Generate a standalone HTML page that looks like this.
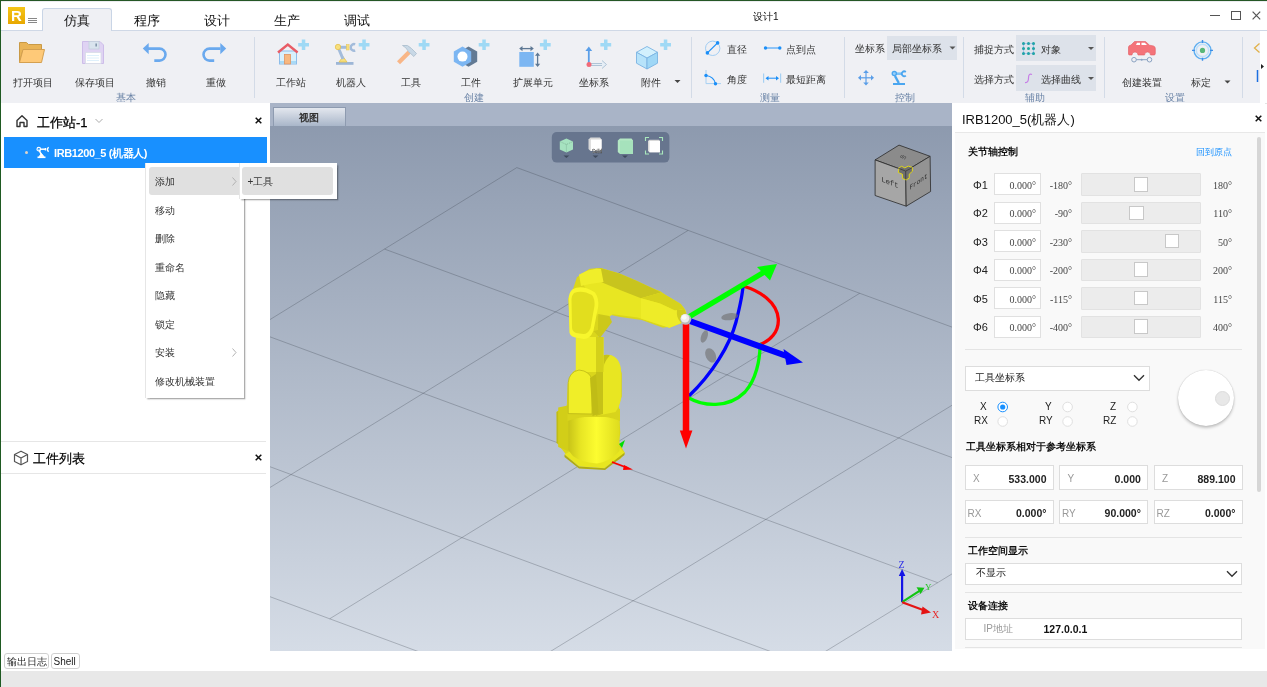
<!DOCTYPE html>
<html><head><meta charset="utf-8">
<style>
*{box-sizing:border-box;margin:0;padding:0}
html,body{width:1267px;height:687px;overflow:hidden;background:#fff;font-family:"Liberation Sans",sans-serif;color:#222}
.a{position:absolute}
.t{position:absolute;white-space:nowrap;line-height:1}
#top{left:0;top:0;width:1267px;height:1px;background:#255725}
#lft{left:0;top:0;width:1px;height:687px;background:#1f5a22}
#ribbon{left:1px;top:30px;width:1266px;height:73px;background:#eff0f4;border-top:1px solid #cfd8e6}
.sep{position:absolute;width:1px;background:#d3dbe7}
.lbl{position:absolute;margin:1px 0 0 1px;font-size:10px;color:#333;white-space:nowrap;line-height:1;text-align:center}
.grp{position:absolute;margin:1px 0 0 1px;font-size:10px;color:#6a83a6;white-space:nowrap;line-height:1}
#left{left:1px;top:103px;width:265px;height:548px;background:#fff}
#gapL{left:265px;top:103px;width:5px;height:548px;background:#fff}
#vp{left:270px;top:103px;width:682px;height:548px;background:linear-gradient(#8a97ac,#d5dce6)}
#vptabs{left:270px;top:103px;width:682px;height:23px;background:#a9b4c7}
#gapR{left:952px;top:103px;width:3px;height:548px;background:#fff}
#right{left:955px;top:103px;width:310px;height:546px;background:#f9f9f9}
#bottom{left:1px;top:671px;width:1266px;height:16px;background:#e8e8e8}
</style></head><body>
<div id="root" style="position:absolute;left:0;top:0;width:1267px;height:687px;will-change:transform">
<div id="top" class="a"></div><div class="a" style="left:0;top:1px;width:1267px;height:1px;background:#ececf0"></div>
<div id="ribbon" class="a"></div>
<!-- TITLE BAR -->
<div class="a" style="left:8px;top:7px;width:17px;height:17px;background:linear-gradient(#f5c518,#e8a800)"></div>
<div class="t" style="left:11px;top:8px;font-size:15px;font-weight:bold;color:#fff">R</div>
<div class="a" style="left:28px;top:18px;width:9px;height:1px;background:#888"></div>
<div class="a" style="left:28px;top:20px;width:9px;height:1px;background:#888"></div>
<div class="a" style="left:28px;top:22px;width:9px;height:1px;background:#888"></div>
<div class="a" style="left:42px;top:8px;width:70px;height:23px;background:#eff0f4;border:1px solid #c9d5e6;border-bottom:none;border-radius:3px 3px 0 0"></div>
<div class="t" style="left:64px;top:14px;font-size:13px;color:#111">仿真</div>
<div class="t" style="left:134px;top:14px;font-size:13px;color:#111">程序</div>
<div class="t" style="left:204px;top:14px;font-size:13px;color:#111">设计</div>
<div class="t" style="left:274px;top:14px;font-size:13px;color:#111">生产</div>
<div class="t" style="left:344px;top:14px;font-size:13px;color:#111">调试</div>
<div class="t" style="left:753px;top:12px;font-size:10px;color:#111">设计1</div>
<div class="a" style="left:1210px;top:15px;width:10px;height:1.2px;background:#555"></div>
<div class="a" style="left:1231px;top:11px;width:10.2px;height:9px;border:1.2px solid #555"></div>
<svg class="a" style="left:1252px;top:11px" width="9" height="9"><path d="M0.6 0.6L8.2 8.4M8.2 0.6L0.6 8.4" stroke="#555" stroke-width="1.2"/></svg>


<!-- RIBBON CONTENT -->
<div class="a" style="left:1px;top:103px;width:1266px;height:1px;background:#e4e4e4"></div>
<div class="sep" style="left:254px;top:37px;height:61px"></div>
<div class="sep" style="left:691px;top:37px;height:61px"></div>
<div class="sep" style="left:844px;top:37px;height:61px"></div>
<div class="sep" style="left:963px;top:37px;height:61px"></div>
<div class="sep" style="left:1104px;top:37px;height:61px"></div>
<div class="sep" style="left:1242px;top:37px;height:61px"></div>
<div class="a" style="left:1260px;top:31px;width:7px;height:72px;background:#fff"></div>
<div class="lbl" style="left:12px;top:77px">打开项目</div>
<div class="lbl" style="left:74px;top:77px">保存项目</div>
<div class="lbl" style="left:145px;top:77px">撤销</div>
<div class="lbl" style="left:205px;top:77px">重做</div>
<div class="grp" style="left:115px;top:92px">基本</div>
<div class="lbl" style="left:275px;top:77px">工作站</div>
<div class="lbl" style="left:335px;top:77px">机器人</div>
<div class="lbl" style="left:400px;top:77px">工具</div>
<div class="lbl" style="left:460px;top:77px">工件</div>
<div class="lbl" style="left:512px;top:77px">扩展单元</div>
<div class="lbl" style="left:578px;top:77px">坐标系</div>
<div class="lbl" style="left:640px;top:77px">附件</div>
<div class="grp" style="left:463px;top:92px">创建</div>
<div class="lbl" style="left:726px;top:44px">直径</div>
<div class="lbl" style="left:785px;top:44px">点到点</div>
<div class="lbl" style="left:726px;top:74px">角度</div>
<div class="lbl" style="left:785px;top:74px">最短距离</div>
<div class="grp" style="left:759px;top:92px">测量</div>
<div class="lbl" style="left:854px;top:43px">坐标系</div>
<div class="a" style="left:887px;top:36px;width:70px;height:24px;background:#dde2ea"></div>
<div class="lbl" style="left:891px;top:43px">局部坐标系</div>
<div class="grp" style="left:894px;top:92px">控制</div>
<div class="lbl" style="left:973px;top:44px">捕捉方式</div>
<div class="a" style="left:1016px;top:35px;width:80px;height:26px;background:#dde2ea"></div>
<div class="lbl" style="left:1040px;top:44px">对象</div>
<div class="lbl" style="left:973px;top:74px">选择方式</div>
<div class="a" style="left:1016px;top:65px;width:80px;height:26px;background:#dde2ea"></div>
<div class="lbl" style="left:1040px;top:74px">选择曲线</div>
<div class="grp" style="left:1024px;top:92px">辅助</div>
<div class="lbl" style="left:1121px;top:77px">创建装置</div>
<div class="lbl" style="left:1190px;top:77px">标定</div>
<div class="grp" style="left:1164px;top:92px">设置</div>
<svg class="a" style="left:0;top:0" width="1267" height="103">
 <!-- folder -->
 <path d="M19.5 62.5V42.5H26.5L28.5 44.5H41.5V50H23Z" fill="#e9b457" stroke="#c99a46" stroke-width="1"/>
 <path d="M19.5 62.5L23 49.5H44.5L41.5 62.5Z" fill="#fec978" stroke="#d4a050" stroke-width="1"/>
 <!-- save -->
 <path d="M82.5 41.5H100L103.5 45V63.5H82.5Z" fill="#dfd3f3" stroke="#cdbde9" stroke-width="1"/>
 <rect x="89" y="41.5" width="10" height="7.5" fill="#d9e4ee" stroke="#c3d0dc" stroke-width="0.8"/>
 <rect x="95.5" y="43.5" width="1.3" height="3" fill="#6e849c"/>
 <rect x="85.5" y="52.5" width="15.5" height="11" fill="#fff" stroke="#d8dde6" stroke-width="0.8"/>
 <path d="M87 55.5H99M87 58H99M87 60.5H99" stroke="#d6ecfa" stroke-width="0.8"/>
 <!-- undo / redo -->
 <path d="M148 48.6H159.5A6 6 0 0 1 159.5 60.6H154.3" fill="none" stroke="#6aa9ee" stroke-width="2.6"/>
 <path d="M142.8 48.6L148.7 43V54.2Z" fill="#6aa9ee"/>
 <path d="M220.5 48.6H209.5A6 6 0 0 0 209.5 60.6H214.2" fill="none" stroke="#6aa9ee" stroke-width="2.6"/>
 <path d="M226.2 48.6L220.3 43V54.2Z" fill="#6aa9ee"/>
 <!-- plus signs -->
 <g fill="#9fd9f5">
  <path d="M301.8 39.5h3.5v3.6h3.7v3.5h-3.7v3.5h-3.5v-3.5h-3.6v-3.5h3.6z"/>
  <path d="M362.3 39.5h3.5v3.6h3.7v3.5h-3.7v3.5h-3.5v-3.5h-3.6v-3.5h3.6z"/>
  <path d="M422.3 39.5h3.5v3.6h3.7v3.5h-3.7v3.5h-3.5v-3.5h-3.6v-3.5h3.6z"/>
  <path d="M482.3 39.5h3.5v3.6h3.7v3.5h-3.7v3.5h-3.5v-3.5h-3.6v-3.5h3.6z"/>
  <path d="M543.5 39.5h3.5v3.6h3.7v3.5h-3.7v3.5h-3.5v-3.5h-3.6v-3.5h3.6z"/>
  <path d="M604 39.5h3.5v3.6h3.7v3.5h-3.7v3.5h-3.5v-3.5h-3.6v-3.5h3.6z"/>
  <path d="M663.8 39.5h3.5v3.6h3.7v3.5h-3.7v3.5h-3.5v-3.5h-3.6v-3.5h3.6z"/>
 </g>
 <!-- house -->
 <rect x="279.5" y="51" width="17" height="13" fill="#d8f0fc" stroke="#8dbde9" stroke-width="1"/>
 <rect x="280" y="61" width="16" height="2.5" fill="#a8daf6"/>
 <rect x="284.5" y="54.5" width="6" height="9.5" fill="#f8b880" stroke="#e09462" stroke-width="0.8"/>
 <path d="M278 52.5L287.8 44.6L297.6 52.5" fill="none" stroke="#e85c66" stroke-width="2.4"/>
 <!-- robot icon -->
 <rect x="336" y="62" width="17.5" height="2.8" fill="#9db6d6"/>
 <path d="M339 62L343 56.5L347 62Z" fill="#f7df7d" stroke="#e6c24e" stroke-width="0.8"/>
 <path d="M343 59L338 47" stroke="#a3bcdb" stroke-width="3"/>
 <path d="M339 47.3H348" stroke="#a3bcdb" stroke-width="3"/>
 <circle cx="338" cy="47" r="2.7" fill="#f7df7d" stroke="#e6c24e" stroke-width="0.8"/>
 <rect x="346.5" y="44.6" width="2.6" height="5.4" fill="#f7df7d" stroke="#e6c24e" stroke-width="0.5"/>
 <path d="M355.2 44.3A3.3 3.3 0 1 0 355.2 50.5" fill="none" stroke="#a3bcdb" stroke-width="2.4"/>
 <!-- hammer -->
 <path d="M398.5 62.8L409 52.3" stroke="#f8b687" stroke-width="4.2"/>
 <path d="M402.5 45.5Q408 44 411.5 48.5L416.5 53.5L413.8 56.5L408.5 51.5Q406 47 402.5 45.5Z" fill="#c8d8e6" stroke="#a9bccc" stroke-width="0.8"/>
 <!-- nut -->
 <path d="M468.5 46.4L477.2 51.5V61.7L468.5 66.8L459.8 61.7V51.5Z" fill="#627a94"/>
 <path d="M462.5 46.4L471.2 51.5V61.7L462.5 66.8L453.8 61.7V51.5Z" fill="#7cb6f2"/>
 <circle cx="462.5" cy="56.6" r="5" fill="#fff"/>
 <!-- ext unit -->
 <rect x="519.3" y="52" width="14.5" height="14.8" fill="#7cb6f2"/>
 <path d="M521 48.6H532" stroke="#5e7894" stroke-width="1.3"/>
 <path d="M519.2 48.6L522.5 46V51.2ZM533.8 48.6L530.5 46V51.2Z" fill="#5e7894"/>
 <path d="M537.6 54.5V65" stroke="#5e7894" stroke-width="1.3"/>
 <path d="M537.6 52.5L535 55.8H540.2ZM537.6 67L535 63.7H540.2Z" fill="#5e7894"/>
 <!-- coord -->
 <path d="M589 64.5H603" stroke="#a9bfd3" stroke-width="3"/>
 <path d="M589 64.5H603" stroke="#e6eef6" stroke-width="1.2"/>
 <path d="M602 60.5L606.5 64.5L602 68.5" fill="#e6eef6" stroke="#a9bfd3" stroke-width="0.9"/>
 <path d="M588.8 64V50" stroke="#5a9ee8" stroke-width="1.8"/>
 <path d="M588.8 46.5L585.4 51H592.2Z" fill="#5a9ee8"/>
 <circle cx="589" cy="64.5" r="2.5" fill="#f26a78"/>
 <!-- cube -->
 <path d="M647 46.5L657.5 52.3L647 58.1L636.5 52.3Z" fill="#d2f0fd" stroke="#7ab3e2" stroke-width="0.9"/>
 <path d="M636.5 52.3L647 58.1V69L636.5 63.2Z" fill="#b7e3fa" stroke="#7ab3e2" stroke-width="0.9"/>
 <path d="M657.5 52.3L647 58.1V69L657.5 63.2Z" fill="#9fd7f6" stroke="#7ab3e2" stroke-width="0.9"/>
 <path d="M674.5 80L680.5 80L677.5 83Z" fill="#444"/>
 <!-- measure -->
 <circle cx="712.7" cy="48.3" r="7.2" fill="none" stroke="#98c8f2" stroke-width="0.9"/>
 <path d="M707.4 52.9L717.6 42.9" stroke="#1b8ff8" stroke-width="1.3"/>
 <circle cx="707.4" cy="52.9" r="1.8" fill="#1b8ff8"/><circle cx="717.6" cy="42.9" r="1.8" fill="#1b8ff8"/>
 <path d="M765.5 48H779.8" stroke="#3d9ff8" stroke-width="1.1"/>
 <circle cx="765.5" cy="48" r="1.7" fill="#1b8ff8"/><circle cx="779.8" cy="48" r="1.7" fill="#1b8ff8"/>
 <path d="M706 70V83.6H721" fill="none" stroke="#a6d0f2" stroke-width="1"/>
 <path d="M706 75.5Q714 76.5 715.5 83.8" fill="none" stroke="#1b8ff8" stroke-width="1.2"/>
 <circle cx="706" cy="75.5" r="1.7" fill="#1b8ff8"/><circle cx="715.5" cy="83.8" r="1.7" fill="#1b8ff8"/>
 <path d="M763.6 73.5V82.8M780.6 73.5V82.8" stroke="#a6d0f2" stroke-width="1.2"/>
 <path d="M767 78.2H777" stroke="#1b8ff8" stroke-width="1"/>
 <path d="M765.5 78.2L768.5 76V80.4ZM779 78.2L776 76V80.4Z" fill="#1b8ff8"/>
 <!-- control -->
 <path d="M949.5 46.5H955.5L952.5 49.5Z" fill="#555"/>
 <g fill="#5a9ee8">
  <path d="M859.5 77.2H872.5V78.4H859.5Z"/><path d="M865.4 71.3H866.6V84.3H865.4Z"/>
  <path d="M858 77.8L861 75V80.6Z"/><path d="M874 77.8L871 75V80.6Z"/>
  <path d="M866 70L863.2 73H868.8Z"/><path d="M866 85.6L863.2 82.6H868.8Z"/>
 </g>
 <g fill="none" stroke="#4aa6f0">
  <path d="M893 84H905" stroke-width="2"/>
  <path d="M895 76L898.8 83" stroke-width="2.4"/>
  <path d="M896 73.7H902" stroke-width="2.6" stroke="#7cc2f6"/>
  <circle cx="894.3" cy="73.6" r="2.1" stroke-width="1.3" fill="#9ad0f8"/>
  <path d="M905.8 72A2.4 2.4 0 1 0 905.8 75.6" stroke-width="1.8"/>
 </g>
 <!-- assist -->
 <g fill="#1aa79c">
  <circle cx="1023.5" cy="43.5" r="1.5"/><circle cx="1028.5" cy="43.5" r="1.5"/><circle cx="1033.5" cy="43.5" r="1.5"/>
  <circle cx="1023.5" cy="48.5" r="1.5"/><circle cx="1028.5" cy="48.5" r="1.5"/><circle cx="1033.5" cy="48.5" r="1.5"/>
  <circle cx="1023.5" cy="53.5" r="1.5"/><circle cx="1028.5" cy="53.5" r="1.5"/><circle cx="1033.5" cy="53.5" r="1.5"/>
 </g>
 <path d="M1023.5 43.5H1033.5V53.5H1023.5Z" fill="none" stroke="#3a8ee0" stroke-width="0.7" stroke-dasharray="1 1"/>
 <path d="M1088 47H1094L1091 50Z" fill="#555"/>
 <path d="M1032 74.5Q1028.5 73 1028.5 78Q1028.5 83 1025 82.5" fill="none" stroke="#c77ee6" stroke-width="1.2"/>
 <path d="M1088 77H1094L1091 80Z" fill="#555"/>
 <!-- settings -->
 <path d="M1128.5 47Q1128.5 45.5 1131 45L1134.5 41.5H1145.5L1149.5 45.2L1153.5 46Q1155.3 46.5 1155.3 48.5V53.5Q1155.3 55 1154 55H1150.5A3 3 0 0 0 1144.5 55H1138A3 3 0 0 0 1132 55H1129.5Q1128.5 55 1128.5 54Z" fill="#f47379" stroke="#e25a62" stroke-width="0.6"/>
 <path d="M1136 45L1137 42.8H1140V45ZM1141.5 45V42.8H1144.8L1147 45Z" fill="#fff"/>
 <path d="M1134 59.7H1149" stroke="#8ba3c2" stroke-width="1"/>
 <circle cx="1134" cy="59.7" r="2.3" fill="#eff0f4" stroke="#8ba3c2" stroke-width="1"/>
 <circle cx="1149.5" cy="59.7" r="2.3" fill="#eff0f4" stroke="#8ba3c2" stroke-width="1"/>
 <circle cx="1141.7" cy="59.7" r="1" fill="#8ba3c2"/>
 <circle cx="1202.5" cy="50.4" r="8.5" fill="none" stroke="#5eaef0" stroke-width="1.4"/>
 <circle cx="1202.5" cy="50.4" r="6.2" fill="none" stroke="#bfe0fa" stroke-width="1.6"/>
 <path d="M1202.5 40V43M1202.5 57.8V60.8M1192 50.4H1195M1210 50.4H1213" stroke="#3d8ee8" stroke-width="1.4"/>
 <circle cx="1202.5" cy="50.4" r="2.6" fill="#59b77a"/>
 <path d="M1224.5 80.5H1230.5L1227.5 83.5Z" fill="#444"/>
 <path d="M1259.5 43.5L1254.5 48L1259.5 52.5" fill="none" stroke="#e1b14a" stroke-width="1.3"/>
 <path d="M1257.5 70V82" stroke="#1b6fe0" stroke-width="1.5"/>
 <path d="M1261 64L1264 66.5L1261 69Z" fill="#222"/>
</svg>
<div id="left" class="a"></div>
<div id="gapL" class="a"></div>
<div id="vp" class="a"></div>
<div id="vptabs" class="a"></div>

<!-- VIEWPORT -->
<div class="a" style="left:272.5px;top:107px;width:73.5px;height:19px;background:linear-gradient(#e3e7ee,#a9b6c9);border:1px solid #8e9bb0;border-bottom:none"></div>
<div class="t" style="left:299px;top:112.5px;font-size:10px;font-weight:bold;color:#333">视图</div>
<svg class="a" style="left:270px;top:126px" width="682" height="525" viewBox="270 126 682 525">
 <g stroke="rgba(50,56,68,0.28)" stroke-width="1" fill="none"><path d="M516.8 167.6L-11.2 492.7"/><path d="M688.1 230.4L159.1 555.7"/><path d="M859.7 293.3L329.7 618.8"/><path d="M1031.7 356.4L500.6 682.0"/><path d="M1204.1 419.5L672.0 745.4"/><path d="M516.8 167.6L1204.1 419.5"/><path d="M384.6 249.1L1070.8 501.2"/><path d="M252.5 330.4L937.7 582.7"/><path d="M120.6 411.6L804.7 664.1"/><path d="M-11.2 492.7L672.0 745.4"/></g>
 <!-- robot -->
 <defs>
  <linearGradient id="cyl" x1="0" x2="1" y1="0" y2="0"><stop offset="0" stop-color="#c8c418"/><stop offset="0.25" stop-color="#e8e624"/><stop offset="0.55" stop-color="#fcfc30"/><stop offset="1" stop-color="#dedc1e"/></linearGradient>
 </defs>
 <path d="M576.9 277.3L589.7 268.7L600.4 268.1L620.3 274.2L641.7 284.9L660.0 291.0L675.3 301.7L684.4 310.9L686.0 321.6L672.2 326.2L663.0 327.7L641.7 320.0L620.3 317.0L606.5 314.0L600.4 327.7L595.8 350.6L598.9 356.7L611.1 355.2L618.7 362.8L621.8 373.5L621.8 396.4L618.7 405.6L620.3 433.1L618.7 442.3L624.9 453.0L620.3 459.1L608.0 465.2L589.7 463.6L568.3 457.5L563.7 451.4L557.6 443.8L556.7 411.7L566.8 405.6L567.7 384.2L572.9 372.0L579.0 367.4L577.5 332.3L569.9 327.7L568.3 298.7L572.9 289.5Z" fill="#dad61c"/>
 <path d="M564.5 454.5L572 450L619 447L624.5 452.7L604.5 468.2L579 466.4Z" fill="#e8e620"/>
 <path d="M564.5 454.5L579 466.4L604.5 468.2L624.5 452.7L624.5 455L605 470L579 468.5L564.5 457Z" fill="#b0ac12"/>
 <path d="M558.2 407.5L568.2 405.5V451L558.2 447Z" fill="#d2ce18"/>
 <path d="M556.5 412L558.2 411V444L556.5 443Z" fill="#c0bc14"/>
 <path d="M568.2 417H619.5V451Q611 461 597 463.6Q580 462 573 456L568.2 450Z" fill="url(#cyl)"/>
 <path d="M567.5 408Q580 403 596 404Q612 404 620 409V421Q608 416 594 416Q578 417 567.5 421Z" fill="#d8d41c"/>
 <path d="M596 360Q604 353 612 355.5Q619 358 620.9 368V399Q619.5 407 615.5 412L596 416Z" fill="#e8e622"/>
 <path d="M596 360Q604 353 610 355.5Q603 362 603 372V414L596 416Z" fill="#c6c218"/>
 <path d="M575.8 337H603.5V372H575.8Z" fill="#eeec26"/>
 <path d="M596 337H603.5V372H596Z" fill="#d4d01a"/>
 <path d="M568.2 413.6V382.7Q569 372 579 370Q590 371 592 380V414Z" fill="#f0ee28" stroke="#bcb816" stroke-width="0.8"/>
 <path d="M590 378L596 374L598.5 414L592.5 416Z" fill="#c0bc16"/>
 <path d="M579 274.8L590 270L601.4 268.2L619.5 273.4L635.4 280.2L654.7 289.2L669.5 297.2L680.8 304L685.3 309.7L686.5 314.2L680.8 323.3L669.5 327.8L652.4 322.2L637.7 317.6L612.7 314.2L607 318.8L598.2 316Z" fill="#e8e622"/>
 <path d="M590 270L601.4 268.2L619.5 273.4L635.4 280.2L654.7 289.2L661 292.5L641 298.3L620 290L601 282L590 277.5Z" fill="#c8c41e"/>
 <path d="M654.7 289.2L669.5 297.2L680.8 304L684.5 309L675 310.5L660 303.5L641 298.3L661 292.5Z" fill="#d6d21c"/>
 <path d="M579 274.8L587 270.8L596.6 268.4L601 269L603.5 282L590 284L581 286Z" fill="#f0ee2a"/>
 <path d="M641 298.3L660 303.5L675 310.5L684.5 309L686.5 314.2L680.8 323.3L669.5 327.8L652.4 322.2L641 318.5Z" fill="#eeec28"/>
 <path d="M609.4 316L598.2 314L598 330L593.4 331L600 338L612 322Z" fill="#ccc81a"/>
 <path d="M572.6 289.2Q582 284 595 292.4Q599 298 598.2 306.8L593.4 330.9Q590 339 583.8 338.9L574.2 337.3Q569 335 569.4 330.9L568.6 298.8Q569 292 572.6 289.2Z" fill="#f8f62c"/>
 <path d="M574 293Q582 289.5 592 295Q595 299 594.5 306L590.5 328Q588 334 583.5 334L576 333Q572 331 572 327.5L571.5 299Q572 295 574 293Z" fill="#e2de1e"/>
 <path d="M677 310L684.5 309L686.5 314.2L681 322.5Q676 318 677 310Z" fill="#d0cc1e"/>
 <!-- gizmo -->
 <g fill="none" stroke-width="3.3" stroke-linecap="round">
  <path d="M743 286C760 291 777 302 778.3 319C779 332 770 341 760 344.5" stroke="#f00"/>
  <path d="M688.9 396C712 374 730 345 736 322C740 306 742.5 295 743 286" stroke="#00f"/>
  <path d="M688.9 398C703 406 728 409 745 392C756 380 760 360 760.1 344.5" stroke="#0f0"/>
 </g>
 <g fill="rgba(110,110,110,0.6)">
  <ellipse cx="729.7" cy="316.7" rx="8.5" ry="3.5" transform="rotate(-8 729.7 316.7)"/>
  <ellipse cx="704.3" cy="336.5" rx="3.2" ry="6.5" transform="rotate(20 704.3 336.5)"/>
  <ellipse cx="710.7" cy="355.4" rx="5" ry="7.5" transform="rotate(-25 710.7 355.4)"/>
 </g>
 <path d="M686 322V431" stroke="#f00" stroke-width="6.5"/>
 <path d="M679.8 430.5H692.4L686 448.5Z" fill="#f00"/>
 <path d="M687 318L766 271" stroke="#0f0" stroke-width="5.5"/>
 <path d="M757 267L777 264L770 280.5Z" fill="#0f0"/>
 <path d="M687 320L788 356.5" stroke="#00f" stroke-width="6"/>
 <path d="M783.5 349L803 362.5L786.5 365Z" fill="#00f"/>
 <circle cx="685.8" cy="319.3" r="5.5" fill="#b8b8b8"/>
 <circle cx="685" cy="318.3" r="4.3" fill="#ececec"/>
 <circle cx="684.2" cy="317.3" r="2.4" fill="#fafafa"/>
 <!-- base small axes -->
 <path d="M612 462L628 468" stroke="#f00" stroke-width="1.6"/><path d="M624 465L633 469.5L623 470Z" fill="#f00"/>
 <path d="M619 444L625 440L622 448Z" fill="#0d0"/>
 <!-- view cube -->
 <path d="M899 145.1L930.1 156.3L905.7 171.1L875.1 159.9Z" fill="#8b8b8b" stroke="#2a2a2a" stroke-width="0.8" stroke-linejoin="round"/>
 <path d="M875.1 159.9L905.7 171.1L906.2 206.2L875.1 195.5Z" fill="#a6a6a6" stroke="#2a2a2a" stroke-width="0.8" stroke-linejoin="round"/>
 <path d="M930.1 156.3L905.7 171.1L906.2 206.2L930.6 191.5Z" fill="#939393" stroke="#2a2a2a" stroke-width="0.8" stroke-linejoin="round"/>
 <path d="M899.2 167.7L901.6 166.3L904.8 167.9L908.3 166.1L912.3 167.4L912.5 171.2L909.2 174.2L909.2 178.1L906.2 179.9L902.7 178.6L902.4 174.2L898.3 172.5Z" fill="#6f6f6f" stroke="#e8de10" stroke-width="0.9"/>
 <path d="M899 168.5L905.7 171.1L912 167.8M905.7 171.1V179.5" fill="none" stroke="#3a3a3a" stroke-width="0.8"/>
 <text font-family="Liberation Mono" font-size="7.5" fill="#2a2a2a" transform="matrix(0.94,0.37,0,1,881.5,181.5)">Left</text>
 <text font-family="Liberation Mono" font-size="7" fill="#2a2a2a" transform="matrix(0.86,-0.6,0,1,909.5,190)">Front</text>
 <text font-family="Liberation Mono" font-size="6.5" fill="#3a3a3a" transform="matrix(-0.8,-0.25,0.5,-0.6,907,157)">Up</text>
 <!-- triad -->
 <path d="M902.1 602.2V574" stroke="#1414e6" stroke-width="2.2"/><path d="M898.8 576H905.4L902.1 569Z" fill="#1414e6"/>
 <path d="M902.1 602.2L919.5 590.8" stroke="#12c412" stroke-width="2.2"/><path d="M916.5 587.2L924.5 587.8L920.5 594Z" fill="#12c412"/>
 <path d="M902.1 602.2L924.5 610.5" stroke="#e41414" stroke-width="2.2"/><path d="M922.5 606.5L931 612.5L921 614.5Z" fill="#e41414"/>
 <text x="898.5" y="568" font-family="Liberation Serif" font-size="10" fill="#2a2ae8">Z</text>
 <text x="925" y="589.5" font-family="Liberation Serif" font-size="9" fill="#28c828">Y</text>
 <text x="932" y="618" font-family="Liberation Serif" font-size="10" fill="#e82828">X</text>
 <!-- toolbar -->
 <rect x="551.8" y="132" width="117.6" height="30.6" rx="5" fill="#67758e"/>
 <g>
  <path d="M566.4 138.5L573 141.5V149.5L566.4 152.5L559.8 149.5V141.5Z" fill="#a6e2c0"/>
  <path d="M559.8 141.5L566.4 144.5L573 141.5M566.4 144.5V152.5" fill="none" stroke="#6a9c80" stroke-width="0.6" stroke-dasharray="1 1"/>
  <path d="M563.5 155.5H569.3L566.4 158Z" fill="#3f4a5c"/>
  <path d="M588.5 139.5L590.5 137.5H600L601.5 139.5V151H590.5L588.5 149Z" fill="#d8d8d8"/>
  <rect x="590.8" y="139.5" width="10.8" height="11.5" fill="#fff"/>
  <text x="592" y="152.5" font-family="Liberation Sans" font-size="4.5" fill="#fff" stroke="#333" stroke-width="0.3">Solid</text>
  <path d="M592.6 155.5H598.4L595.5 158Z" fill="#3f4a5c"/>
  <path d="M617.8 140.5L620 138.6H631.5L633 140.5V154H620L617.8 152Z" fill="#b4e8c4"/>
  <rect x="620" y="140.5" width="13" height="13.5" fill="#a6e2bc"/>
  <path d="M622.1 155.5H627.9L625 158Z" fill="#3f4a5c"/>
  <path d="M648 141L649.5 139.8H659L660 141V152.3H649.5L648 151Z" fill="#d8d8d8"/>
  <rect x="649.5" y="141" width="10.5" height="11.3" fill="#fff"/>
  <path d="M645.5 141V137.5H649M659 137.5H662.5V141M662.5 150.5V154H659M649 154H645.5V150.5" fill="none" stroke="#a8e8bc" stroke-width="1.1"/>
 </g>
</svg>
<div id="gapR" class="a"></div>
<div id="right" class="a"></div>
<div id="bottom" class="a"></div>
<!-- RIGHT PANEL -->
<div class="a" style="left:955px;top:103px;width:310px;height:29px;background:#fff"></div>
<div class="a" style="left:955px;top:132px;width:310px;height:1px;background:#e8e8e8"></div>
<div class="t" style="left:962px;top:113px;font-size:13px;color:#111">IRB1200_5(机器人)</div>
<svg class="a" style="left:1255px;top:115px" width="7" height="7"><path d="M0.7 0.7L6.3 6.3M6.3 0.7L0.7 6.3" stroke="#111" stroke-width="1.5"/></svg>
<div class="a" style="left:1257px;top:137px;width:4px;height:355px;background:#d6d6d6;border-radius:2px"></div>
<div class="t" style="left:968px;top:147px;font-size:10px;font-weight:bold;color:#111">关节轴控制</div>
<div class="t" style="left:1195.5px;top:148px;font-size:9px;color:#1890ff">回到原点</div>
<div class="t" style="left:973px;top:179.9px;font-size:11px;color:#222">Φ1</div>
<div class="a" style="left:993.5px;top:173.4px;width:47.5px;height:22px;background:#fff;border:1px solid #e0e0e0"></div>
<div class="t" style="left:992px;top:180.9px;width:44px;text-align:right;font-size:10px;color:#444;font-family:'Liberation Serif',serif">0.000°</div>
<div class="t" style="left:1040px;top:180.9px;width:32px;text-align:right;font-size:10px;color:#444;font-family:'Liberation Serif',serif">-180°</div>
<div class="a" style="left:1081px;top:173.4px;width:120px;height:22.5px;background:#ececec;border:1px solid #e2e2e2;border-radius:1px"></div>
<div class="a" style="left:1133.8px;top:177.1px;width:14.5px;height:14.5px;background:#fff;border:1px solid #c8c8c8"></div>
<div class="t" style="left:1200px;top:180.9px;width:32px;text-align:right;font-size:10px;color:#444;font-family:'Liberation Serif',serif">180°</div>
<div class="t" style="left:973px;top:208.4px;font-size:11px;color:#222">Φ2</div>
<div class="a" style="left:993.5px;top:201.9px;width:47.5px;height:22px;background:#fff;border:1px solid #e0e0e0"></div>
<div class="t" style="left:992px;top:209.4px;width:44px;text-align:right;font-size:10px;color:#444;font-family:'Liberation Serif',serif">0.000°</div>
<div class="t" style="left:1040px;top:209.4px;width:32px;text-align:right;font-size:10px;color:#444;font-family:'Liberation Serif',serif">-90°</div>
<div class="a" style="left:1081px;top:201.9px;width:120px;height:22.5px;background:#ececec;border:1px solid #e2e2e2;border-radius:1px"></div>
<div class="a" style="left:1129.0px;top:205.6px;width:14.5px;height:14.5px;background:#fff;border:1px solid #c8c8c8"></div>
<div class="t" style="left:1200px;top:209.4px;width:32px;text-align:right;font-size:10px;color:#444;font-family:'Liberation Serif',serif">110°</div>
<div class="t" style="left:973px;top:236.7px;font-size:11px;color:#222">Φ3</div>
<div class="a" style="left:993.5px;top:230.2px;width:47.5px;height:22px;background:#fff;border:1px solid #e0e0e0"></div>
<div class="t" style="left:992px;top:237.7px;width:44px;text-align:right;font-size:10px;color:#444;font-family:'Liberation Serif',serif">0.000°</div>
<div class="t" style="left:1040px;top:237.7px;width:32px;text-align:right;font-size:10px;color:#444;font-family:'Liberation Serif',serif">-230°</div>
<div class="a" style="left:1081px;top:230.2px;width:120px;height:22.5px;background:#ececec;border:1px solid #e2e2e2;border-radius:1px"></div>
<div class="a" style="left:1164.7px;top:233.9px;width:14.5px;height:14.5px;background:#fff;border:1px solid #c8c8c8"></div>
<div class="t" style="left:1200px;top:237.7px;width:32px;text-align:right;font-size:10px;color:#444;font-family:'Liberation Serif',serif">50°</div>
<div class="t" style="left:973px;top:265.1px;font-size:11px;color:#222">Φ4</div>
<div class="a" style="left:993.5px;top:258.6px;width:47.5px;height:22px;background:#fff;border:1px solid #e0e0e0"></div>
<div class="t" style="left:992px;top:266.1px;width:44px;text-align:right;font-size:10px;color:#444;font-family:'Liberation Serif',serif">0.000°</div>
<div class="t" style="left:1040px;top:266.1px;width:32px;text-align:right;font-size:10px;color:#444;font-family:'Liberation Serif',serif">-200°</div>
<div class="a" style="left:1081px;top:258.6px;width:120px;height:22.5px;background:#ececec;border:1px solid #e2e2e2;border-radius:1px"></div>
<div class="a" style="left:1133.8px;top:262.3px;width:14.5px;height:14.5px;background:#fff;border:1px solid #c8c8c8"></div>
<div class="t" style="left:1200px;top:266.1px;width:32px;text-align:right;font-size:10px;color:#444;font-family:'Liberation Serif',serif">200°</div>
<div class="t" style="left:973px;top:293.7px;font-size:11px;color:#222">Φ5</div>
<div class="a" style="left:993.5px;top:287.2px;width:47.5px;height:22px;background:#fff;border:1px solid #e0e0e0"></div>
<div class="t" style="left:992px;top:294.7px;width:44px;text-align:right;font-size:10px;color:#444;font-family:'Liberation Serif',serif">0.000°</div>
<div class="t" style="left:1040px;top:294.7px;width:32px;text-align:right;font-size:10px;color:#444;font-family:'Liberation Serif',serif">-115°</div>
<div class="a" style="left:1081px;top:287.2px;width:120px;height:22.5px;background:#ececec;border:1px solid #e2e2e2;border-radius:1px"></div>
<div class="a" style="left:1133.8px;top:290.9px;width:14.5px;height:14.5px;background:#fff;border:1px solid #c8c8c8"></div>
<div class="t" style="left:1200px;top:294.7px;width:32px;text-align:right;font-size:10px;color:#444;font-family:'Liberation Serif',serif">115°</div>
<div class="t" style="left:973px;top:322.1px;font-size:11px;color:#222">Φ6</div>
<div class="a" style="left:993.5px;top:315.6px;width:47.5px;height:22px;background:#fff;border:1px solid #e0e0e0"></div>
<div class="t" style="left:992px;top:323.1px;width:44px;text-align:right;font-size:10px;color:#444;font-family:'Liberation Serif',serif">0.000°</div>
<div class="t" style="left:1040px;top:323.1px;width:32px;text-align:right;font-size:10px;color:#444;font-family:'Liberation Serif',serif">-400°</div>
<div class="a" style="left:1081px;top:315.6px;width:120px;height:22.5px;background:#ececec;border:1px solid #e2e2e2;border-radius:1px"></div>
<div class="a" style="left:1133.8px;top:319.3px;width:14.5px;height:14.5px;background:#fff;border:1px solid #c8c8c8"></div>
<div class="t" style="left:1200px;top:323.1px;width:32px;text-align:right;font-size:10px;color:#444;font-family:'Liberation Serif',serif">400°</div>

<div class="a" style="left:965px;top:349px;width:277px;height:1px;background:#e4e4e4"></div>
<div class="a" style="left:965px;top:366px;width:184.5px;height:24.5px;background:#fff;border:1px solid #ddd"></div>
<div class="t" style="left:975px;top:373px;font-size:10px;color:#222">工具坐标系</div>
<svg class="a" style="left:1133px;top:374px" width="12" height="8"><path d="M1 1.2L6 6.2L11 1.2" fill="none" stroke="#333" stroke-width="1.4"/></svg>
<div class="t" style="left:980px;top:402px;font-size:10px;color:#222">X</div>
<div class="t" style="left:1045px;top:402px;font-size:10px;color:#222">Y</div>
<div class="t" style="left:1110px;top:402px;font-size:10px;color:#222">Z</div>
<div class="t" style="left:974px;top:416px;font-size:10px;color:#222">RX</div>
<div class="t" style="left:1039px;top:416px;font-size:10px;color:#222">RY</div>
<div class="t" style="left:1103px;top:416px;font-size:10px;color:#222">RZ</div>
<svg class="a" style="left:995px;top:400px" width="145" height="29">
 <circle cx="7.7" cy="7" r="4.8" fill="#fff" stroke="#1890ff" stroke-width="1"/><circle cx="7.7" cy="7" r="2.6" fill="#1890ff"/>
 <circle cx="72.6" cy="7" r="4.8" fill="#fff" stroke="#e0e0e0" stroke-width="1"/>
 <circle cx="137.4" cy="7" r="4.8" fill="#fff" stroke="#e0e0e0" stroke-width="1"/>
 <circle cx="7.7" cy="21.5" r="4.8" fill="#fff" stroke="#e0e0e0" stroke-width="1"/>
 <circle cx="72.6" cy="21.5" r="4.8" fill="#fff" stroke="#e0e0e0" stroke-width="1"/>
 <circle cx="137.4" cy="21.5" r="4.8" fill="#fff" stroke="#e0e0e0" stroke-width="1"/>
</svg>
<div class="a" style="left:1178px;top:370px;width:56px;height:56px;border-radius:50%;background:#fff;box-shadow:0 2px 3px rgba(0,0,0,0.22), 0 0 1px rgba(0,0,0,0.25)"></div>
<div class="a" style="left:1214.5px;top:390.5px;width:15px;height:15px;border-radius:50%;background:#e8e8e8;border:1px solid #dcdcdc"></div>
<div class="t" style="left:966px;top:442px;font-size:10px;font-weight:bold;color:#111">工具坐标系相对于参考坐标系</div>
<div class="a" style="left:965.0px;top:465.1px;width:88.5px;height:24.8px;background:#fff;border:1px solid #ddd"></div>
<div class="t" style="left:973.0px;top:474.0px;font-size:10px;color:#999">X</div>
<div class="t" style="left:976.5px;top:473.5px;width:70px;text-align:right;font-size:10.5px;font-weight:bold;color:#222">533.000</div>
<div class="a" style="left:1059.4px;top:465.1px;width:88.5px;height:24.8px;background:#fff;border:1px solid #ddd"></div>
<div class="t" style="left:1067.4px;top:474.0px;font-size:10px;color:#999">Y</div>
<div class="t" style="left:1070.9px;top:473.5px;width:70px;text-align:right;font-size:10.5px;font-weight:bold;color:#222">0.000</div>
<div class="a" style="left:1154.0px;top:465.1px;width:88.5px;height:24.8px;background:#fff;border:1px solid #ddd"></div>
<div class="t" style="left:1162.0px;top:474.0px;font-size:10px;color:#999">Z</div>
<div class="t" style="left:1165.5px;top:473.5px;width:70px;text-align:right;font-size:10.5px;font-weight:bold;color:#222">889.100</div>
<div class="a" style="left:965.0px;top:500.0px;width:88.5px;height:24.2px;background:#fff;border:1px solid #ddd"></div>
<div class="t" style="left:967.5px;top:508.6px;font-size:10px;color:#999">RX</div>
<div class="t" style="left:976.5px;top:508.1px;width:70px;text-align:right;font-size:10.5px;font-weight:bold;color:#222">0.000°</div>
<div class="a" style="left:1059.4px;top:500.0px;width:88.5px;height:24.2px;background:#fff;border:1px solid #ddd"></div>
<div class="t" style="left:1061.9px;top:508.6px;font-size:10px;color:#999">RY</div>
<div class="t" style="left:1070.9px;top:508.1px;width:70px;text-align:right;font-size:10.5px;font-weight:bold;color:#222">90.000°</div>
<div class="a" style="left:1154.0px;top:500.0px;width:88.5px;height:24.2px;background:#fff;border:1px solid #ddd"></div>
<div class="t" style="left:1156.5px;top:508.6px;font-size:10px;color:#999">RZ</div>
<div class="t" style="left:1165.5px;top:508.1px;width:70px;text-align:right;font-size:10.5px;font-weight:bold;color:#222">0.000°</div>

<div class="a" style="left:965px;top:537px;width:277px;height:1px;background:#e4e4e4"></div>
<div class="t" style="left:968px;top:545.5px;font-size:10px;font-weight:bold;color:#111">工作空间显示</div>
<div class="a" style="left:965px;top:562.5px;width:277px;height:22.5px;background:#fff;border:1px solid #ddd"></div>
<div class="t" style="left:975.5px;top:568px;font-size:10px;color:#222">不显示</div>
<svg class="a" style="left:1226px;top:570px" width="12" height="8"><path d="M1 1.2L6 6.2L11 1.2" fill="none" stroke="#333" stroke-width="1.4"/></svg>
<div class="a" style="left:965px;top:592px;width:277px;height:1px;background:#e4e4e4"></div>
<div class="t" style="left:968px;top:600.5px;font-size:10px;font-weight:bold;color:#111">设备连接</div>
<div class="a" style="left:965px;top:618px;width:277px;height:22px;background:#fff;border:1px solid #ddd"></div>
<div class="t" style="left:983.5px;top:624px;font-size:10px;color:#999">IP地址</div>
<div class="t" style="left:1043.5px;top:624px;font-size:10.5px;font-weight:bold;color:#111">127.0.0.1</div>
<div class="a" style="left:965px;top:647px;width:277px;height:1px;background:#e4e4e4"></div>

<!-- LEFT PANEL -->
<svg class="a" style="left:15px;top:114px" width="14" height="14"><path d="M2 12.5V6.5L7 1.8L12 6.5V12.5H9V8.5H5V12.5Z" fill="none" stroke="#333" stroke-width="1.4" stroke-linejoin="round"/></svg>
<div class="t" style="left:37px;top:115.5px;font-size:13px;color:#000;-webkit-text-stroke:0.25px #000">工作站-1</div>
<svg class="a" style="left:95px;top:118px" width="8" height="6"><path d="M0.5 1L4 4.5L7.5 1" fill="none" stroke="#aaa" stroke-width="1"/></svg>
<svg class="a" style="left:255px;top:117px" width="7" height="7"><path d="M0.7 0.7L6.3 6.3M6.3 0.7L0.7 6.3" stroke="#111" stroke-width="1.5"/></svg>
<div class="a" style="left:4px;top:137px;width:263px;height:31px;background:#1890ff"></div>
<div class="a" style="left:24.7px;top:150.7px;width:3.6px;height:3.6px;border-radius:50%;background:#ddd3c8"></div>
<svg class="a" style="left:36px;top:146px" width="14" height="13"><g stroke="#fff" fill="none"><path d="M1.5 11.3H9.5" stroke-width="1.6"/><path d="M3 10.5L5.5 7.5L8 10.5Z" fill="#fff" stroke-width="0.8"/><path d="M5.5 9L2.8 3.5" stroke-width="1.6"/><circle cx="2.8" cy="3.2" r="1.8" stroke-width="1.1"/><path d="M4.5 3.2H9" stroke-width="1.5"/><path d="M12.8 1.3A2.3 2.3 0 0 0 12.8 5.5" stroke-width="1.4"/><path d="M9.5 2V4.5" stroke-width="1.5"/></g></svg>
<div class="t" style="left:54px;top:148px;font-size:11px;font-weight:bold;color:#fff;letter-spacing:-0.4px">IRB1200_5 (机器人)</div>
<!-- context menu -->
<div class="a" style="left:145px;top:163px;width:99px;height:235px;background:#fff;box-shadow:1.5px 1.5px 1.5px rgba(0,0,0,0.32);border-left:1px solid #e6e6e6"></div>
<div class="a" style="left:149px;top:166.5px;width:95px;height:28px;background:#e0e0e0;border-radius:3px"></div>
<div class="t" style="left:155px;top:177px;font-size:10px;color:#333">添加</div>
<svg class="a" style="left:232px;top:177px" width="5" height="9"><path d="M0.5 0.5L4 4.5L0.5 8.5" fill="none" stroke="#aaa" stroke-width="0.9"/></svg>
<div class="t" style="left:155px;top:205.5px;font-size:10px;color:#333">移动</div>
<div class="t" style="left:155px;top:234px;font-size:10px;color:#333">删除</div>
<div class="t" style="left:155px;top:262.5px;font-size:10px;color:#333">重命名</div>
<div class="t" style="left:155px;top:291px;font-size:10px;color:#333">隐藏</div>
<div class="t" style="left:155px;top:319.5px;font-size:10px;color:#333">锁定</div>
<div class="t" style="left:155px;top:348px;font-size:10px;color:#333">安装</div>
<svg class="a" style="left:232px;top:348px" width="5" height="9"><path d="M0.5 0.5L4 4.5L0.5 8.5" fill="none" stroke="#aaa" stroke-width="0.9"/></svg>
<div class="t" style="left:155px;top:376.5px;font-size:10px;color:#333">修改机械装置</div>
<div class="a" style="left:238.5px;top:163px;width:98px;height:35.5px;background:#fff;box-shadow:1.5px 1.5px 1.5px rgba(0,0,0,0.32);border-left:1px solid #e6e6e6"></div>
<div class="a" style="left:242px;top:166.5px;width:91px;height:28px;background:#e0e0e0;border-radius:3px"></div>
<div class="t" style="left:247.5px;top:177px;font-size:10px;color:#333">+工具</div>
<!-- part list -->
<div class="a" style="left:1px;top:441px;width:265px;height:1px;background:#e6e6e6"></div>
<svg class="a" style="left:13px;top:450px" width="16" height="16"><g fill="none" stroke="#555" stroke-width="1.2" stroke-linejoin="round"><path d="M8 1.2L14.5 4.5V11.5L8 14.8L1.5 11.5V4.5Z"/><path d="M1.5 4.5L8 8L14.5 4.5M8 8V14.8"/></g></svg>
<div class="t" style="left:33px;top:452px;font-size:13px;color:#000;-webkit-text-stroke:0.2px #000">工件列表</div>
<svg class="a" style="left:255px;top:454px" width="7" height="7"><path d="M0.7 0.7L6.3 6.3M6.3 0.7L0.7 6.3" stroke="#111" stroke-width="1.5"/></svg>
<div class="a" style="left:1px;top:473px;width:265px;height:1px;background:#e6e6e6"></div>
<div class="a" style="left:3.5px;top:653px;width:45px;height:16px;border:1px solid #d0d0d0;border-radius:3px;background:#fff"></div>
<div class="t" style="left:6.5px;top:657px;font-size:9.6px;color:#222">输出日志</div>
<div class="a" style="left:50.5px;top:653px;width:29.5px;height:16px;border:1px solid #d0d0d0;border-radius:3px;background:#fff"></div>
<div class="t" style="left:53.5px;top:657px;font-size:10px;color:#222">Shell</div>

<div id="lft" class="a"></div>
</div>
</body></html>
